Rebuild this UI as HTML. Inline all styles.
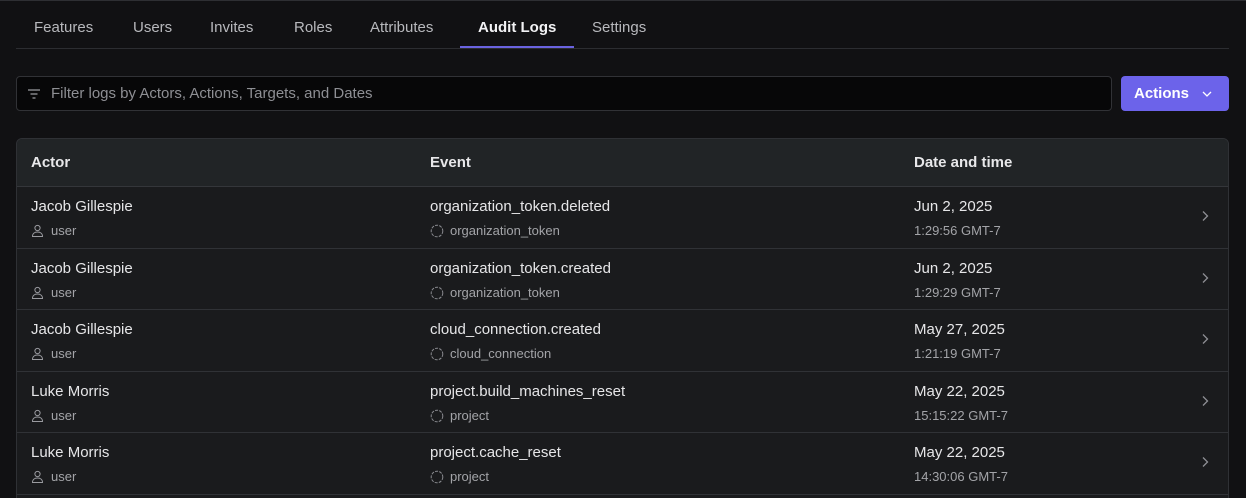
<!DOCTYPE html>
<html style="overflow:hidden;height:498px"><head><style>
*{box-sizing:border-box;margin:0;padding:0}
body{width:1246px;height:498px;overflow:hidden;background:#111113;font-family:"Liberation Sans",sans-serif;color:#e8e8ea;position:relative}
.top{position:absolute;left:0;top:0;width:1246px;height:1px;background:#2e2f33}
.tabs{position:absolute;left:16px;top:0;width:1213px;height:49px;border-bottom:1px solid #2c2d31}
.tab{position:absolute;top:19px;font-size:15px;color:#b8b9bd}
.tab.active{color:#f2f2f4;font-weight:bold}
.ul{position:absolute;left:444px;width:114px;top:46px;height:2px;background:#6a63e0}
.search{position:absolute;left:16px;top:76px;width:1096px;height:35px;background:#070708;border:1px solid #313236;border-radius:4px}
.search span{position:absolute;left:34px;top:8px;font-size:15px;color:#8e8f94}
.btn{position:absolute;left:1121px;top:76px;width:108px;height:35px;background:#6c63ea;border-radius:4px;color:#fff;font-weight:bold;font-size:15px}
.btn span{position:absolute;left:13px;top:9px}
.table{position:absolute;left:16px;top:138px;width:1213px;height:370px;border:1px solid #2f3135;border-radius:6px;overflow:hidden;background:#1a1b1d}
.head{height:48px;background:#212426;border-bottom:1px solid #34363a;position:relative;font-weight:bold;font-size:15px}
.head div{position:absolute;top:15px}
.row{height:61.5px;border-bottom:1px solid #303236;position:relative}
.c{position:absolute}
.m{font-size:15px;color:#e6e6e8;top:11px}
.s{font-size:13px;color:#a3a4a8;top:36px}
.s svg{position:absolute;left:0;top:1px}
.s.i{padding-left:20px}
.chev{position:absolute;left:1184px;top:23px}
</style></head><body>
<div class="top"></div>
<div class="tabs">
<div class="tab" style="left:18px">Features</div>
<div class="tab" style="left:117px">Users</div>
<div class="tab" style="left:194px">Invites</div>
<div class="tab" style="left:278px">Roles</div>
<div class="tab" style="left:354px">Attributes</div>
<div class="tab active" style="left:462px">Audit Logs</div>
<div class="tab" style="left:576px">Settings</div>
<div class="ul"></div>
</div>
<div class="search"><svg style="position:absolute;left:10px;top:10px" width="14" height="14" viewBox="0 0 14 14"><path d="M1 3h12M3.5 7h7M5.5 11h3" stroke="#9a9ba0" stroke-width="1.3" fill="none"/></svg><span>Filter logs by Actors, Actions, Targets, and Dates</span></div>
<div class="btn"><span>Actions</span><svg style="position:absolute;left:81px;top:14px" width="10" height="8" viewBox="0 0 10 8"><path d="M1 2l4 4 4-4" stroke="#fff" stroke-width="1.3" fill="none"/></svg></div>
<div class="table">
<div class="head"><div style="left:14px">Actor</div><div style="left:413px">Event</div><div style="left:897px">Date and time</div></div>
<div id="rows"></div>
</div>
<script>
var d=[["Jacob Gillespie","organization_token.deleted","organization_token","Jun 2, 2025","1:29:56 GMT-7"],
["Jacob Gillespie","organization_token.created","organization_token","Jun 2, 2025","1:29:29 GMT-7"],
["Jacob Gillespie","cloud_connection.created","cloud_connection","May 27, 2025","1:21:19 GMT-7"],
["Luke Morris","project.build_machines_reset","project","May 22, 2025","15:15:22 GMT-7"],
["Luke Morris","project.cache_reset","project","May 22, 2025","14:30:06 GMT-7"]];
var u='<svg width="13" height="13" viewBox="0 0 13 13"><circle cx="6.5" cy="4" r="2.6" stroke="#9a9ba0" fill="none"/><path d="M1.5 12.5c0-3 2.2-4.5 5-4.5s5 1.5 5 4.5z" stroke="#9a9ba0" fill="none"/></svg>';
var t='<svg width="14" height="14" viewBox="0 0 14 14"><circle cx="7" cy="7" r="5.8" stroke="#8a8b90" fill="none" stroke-dasharray="3 1.2"/></svg>';
var h='';d.forEach(function(r){h+='<div class="row"><div class="c m" style="left:14px">'+r[0]+'</div><div class="c s i" style="left:14px">'+u+'user</div><div class="c m" style="left:413px">'+r[1]+'</div><div class="c s i" style="left:413px">'+t+r[2]+'</div><div class="c m" style="left:897px">'+r[3]+'</div><div class="c s" style="left:897px">'+r[4]+'</div><svg class="chev" width="8" height="12" viewBox="0 0 8 12"><path d="M2 1.5l4.5 4.5-4.5 4.5" stroke="#8e8f94" stroke-width="1.3" fill="none"/></svg></div>'});
document.getElementById('rows').innerHTML=h;
</script>
</body></html>
